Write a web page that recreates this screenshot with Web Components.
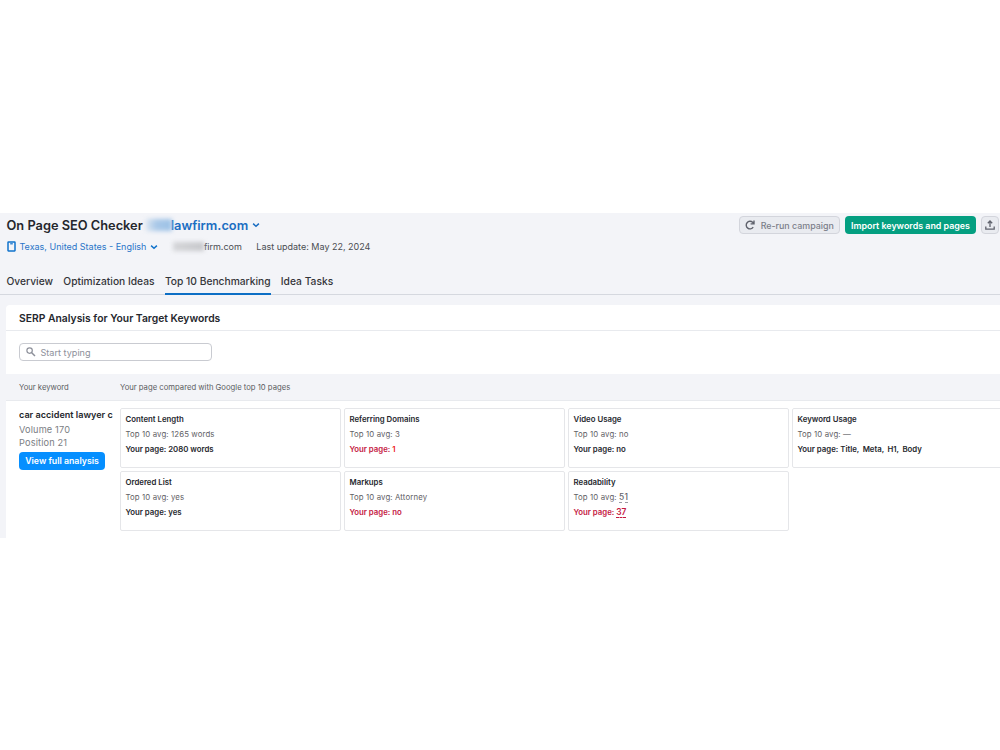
<!DOCTYPE html>
<html lang="en">
<head>
<meta charset="utf-8">
<title>On Page SEO Checker</title>
<style>
	body {
		margin: 0;
		background: #fff;
		font-family: Inter, 'Liberation Sans', sans-serif;
		color: #25272d;
	}
</style>
</head>
<body>
<seo-page></seo-page>

<script>
class SeoIcon extends HTMLElement {
	constructor() {
		super();
		this.attachShadow({ mode: "open" });
	}

	connectedCallback() {
		const icons = {
			chevron: '<svg width="8" height="6" viewBox="0 0 8 6"><path d="M1.1 1.6 4 4.2 6.9 1.6" stroke-width="1.5"/></svg>',
			device: '<svg width="9" height="11" viewBox="0 0 9 11"><rect x="1" y="1" width="7" height="9" rx=".4" stroke-width="1.5"/><path d="M3.2 2.8h2.6" stroke-width="1.2"/></svg>',
			reload: '<svg width="10" height="10" viewBox="0 0 10 10"><path d="M8.2 7.2A3.8 3.8 0 1 1 7.6 2.3L8.7 3.4M9 .6v3.3H5.6" stroke-width="1.4"/></svg>',
			upload: '<svg width="10" height="10" viewBox="0 0 10 10"><path d="M5 7V1.2M2.8 3.2 5 1l2.2 2.2M.8 6.4v2.7h8.4V6.4" stroke-width="1.3"/></svg>',
			search: '<svg width="10" height="10" viewBox="0 0 10 10"><circle cx="3.6" cy="3.6" r="2.7" stroke-width="1.2"/><path d="M5.7 5.7 9 9" stroke-width="1.5"/></svg>'
		};
		this.shadowRoot.innerHTML = `
			<style>
				:host {
					display: inline-flex;
					flex: none;
				}

				svg {
					display: block;
					fill: none;
					stroke: currentColor;
				}
			</style>
			${icons[this.getAttribute('name')]}
		`;
	}
}

class SeoButton extends HTMLElement {
	constructor() {
		super();
		this.attachShadow({ mode: "open" });
	}

	connectedCallback() {
		this.shadowRoot.innerHTML = `
			<style>
				:host {
					display: flex;
					align-items: center;
					justify-content: center;
					gap: 5.5px;
					box-sizing: border-box;
					height: 18px;
					border-radius: 4px;
					font-size: 8.9px;
					font-weight: 600;
					white-space: nowrap;
					cursor: pointer;
				}

				:host([kind="plain"]) {
					border: 1px solid #d3d5dc;
					background: #e9ebf0;
					color: #7b7e89;
					font-weight: 500;
				}

				:host([kind="plain"]) ::slotted(seo-icon) {
					color: #5f626c;
				}

				:host([kind="green"]) {
					background: #049f81;
					color: #fff;
				}

				:host([kind="blue"]) {
					background: #068fff;
					color: #fff;
					font-size: 8.75px;
				}
			</style>
			<slot></slot>
		`;
	}
}

class SeoHeader extends HTMLElement {
	constructor() {
		super();
		this.attachShadow({ mode: "open" });
	}

	connectedCallback() {
		this.shadowRoot.innerHTML = `
			<style>
				:host {
					display: block;
					box-sizing: border-box;
					height: 82px;
					border-bottom: 1px solid #d5d8df;
				}

				.top {
					display: flex;
					justify-content: space-between;
					height: 25px;
					padding: 3px 1px 0 6.5px;
					box-sizing: border-box;
				}

				.title {
					display: flex;
					align-items: center;
					height: 18px;
					font-size: 12.8px;
					font-weight: 600;
					white-space: nowrap;
				}

				.domain {
					color: #1b6ec2;
				}

				.title seo-icon {
					color: #1b6ec2;
					margin-left: 4px;
				}

				/* hidden part of the domain name */
				.mask {
					width: 26px;
					height: 12px;
					margin: 0 -1px 0 3px;
					background: linear-gradient(90deg, #dbe5f1, #a9c8e8 40%, #9dc2e7);
					filter: blur(2px);
				}

				.mask.grey {
					width: 31px;
					height: 9px;
					margin: 0 0 0 15px;
					background: linear-gradient(90deg, #d4d5d8, #c6c7cb);
				}

				.actions {
					display: flex;
					gap: 5px;
				}

				.rerun {
					width: 101px;
				}

				.import {
					width: 131px;
				}

				.export {
					width: 18px;
				}

				.meta {
					display: flex;
					align-items: center;
					height: 17px;
					padding-left: 7px;
					font-size: 9px;
					color: #4a4c52;
					white-space: nowrap;
				}

				.location {
					display: flex;
					align-items: center;
					gap: 3.5px;
					color: #2a74c8;
				}

				.location seo-icon {
					color: #1173cc;
				}

				.update {
					margin-left: 14.5px;
				}

				nav {
					display: flex;
					gap: 10.3px;
					margin-top: 12px;
					padding-left: 6.5px;
					font-size: 10.25px;
					font-weight: 500;
					color: #333539;
					white-space: nowrap;
				}

				nav span {
					box-sizing: border-box;
					height: 28px;
					line-height: 28px;
				}

				nav .active {
					border-bottom: 2px solid #0d6fc5;
				}
			</style>

			<div class="top">
				<div class="title">
					<span class="name">On Page SEO Checker</span>
					<span class="mask"></span>
					<span class="domain">lawfirm.com</span>
					<seo-icon name="chevron"></seo-icon>
				</div>
				<div class="actions">
					<seo-button kind="plain" class="rerun"><seo-icon name="reload"></seo-icon><span>Re-run campaign</span></seo-button>
					<seo-button kind="green" class="import">Import keywords and pages</seo-button>
					<seo-button kind="plain" class="export"><seo-icon name="upload"></seo-icon></seo-button>
				</div>
			</div>
			<div class="meta">
				<span class="location"><seo-icon name="device"></seo-icon><span>Texas, United States - English</span><seo-icon name="chevron"></seo-icon></span>
				<span class="mask grey"></span>
				<span>firm.com</span>
				<span class="update">Last update: May 22, 2024</span>
			</div>
			<nav>
				<span>Overview</span>
				<span>Optimization Ideas</span>
				<span class="active">Top 10 Benchmarking</span>
				<span>Idea Tasks</span>
			</nav>
		`;
	}
}

class MetricCard extends HTMLElement {
	constructor() {
		super();
		this.attachShadow({ mode: "open" });
	}

	connectedCallback() {
		this.shadowRoot.innerHTML = `
			<style>
				:host {
					display: block;
					box-sizing: border-box;
					height: 60px;
					padding: 2.5px 4.5px;
					border: 1px solid #e5e6e9;
					border-radius: 2px;
					font-size: 7.8px;
					line-height: 15.4px;
					white-space: nowrap;
				}

				.name,
				.yours {
					font-weight: 600;
				}

				.avg {
					color: #5f6166;
					letter-spacing: .12px;
				}

				:host([bad]) .yours {
					color: #c4183f;
				}
			</style>
			<div class="name">${this.getAttribute('name')}</div>
			<div class="avg">Top 10 avg: <slot name="avg"></slot></div>
			<div class="yours">Your page: <slot name="page"></slot></div>
		`;
	}
}

class SerpPanel extends HTMLElement {
	constructor() {
		super();
		this.attachShadow({ mode: "open" });
	}

	connectedCallback() {
		this.shadowRoot.innerHTML = `
			<style>
				:host {
					display: block;
					height: 233px;
					margin: 10px 0 0 6px;
					background: #fff;
					border-radius: 4px 0 0 0;
					overflow: hidden;
				}

				h2 {
					box-sizing: border-box;
					height: 26px;
					margin: 0;
					padding-left: 13px;
					border-bottom: 1px solid #e8eaee;
					font-size: 10.35px;
					font-weight: 600;
					line-height: 26px;
				}

				.filter {
					height: 43px;
					padding: 12px 13px 0;
					box-sizing: border-box;
				}

				.search {
					display: flex;
					align-items: center;
					gap: 5px;
					box-sizing: border-box;
					width: 193px;
					height: 18px;
					padding-left: 5.5px;
					border: 1px solid #c9cbd1;
					border-radius: 4px;
					font-size: 9.1px;
					color: #8d909a;
				}

				.columns {
					display: flex;
					box-sizing: border-box;
					height: 27px;
					padding-left: 13px;
					border-bottom: 1px solid #e8eaee;
					background: #f3f4f8;
					font-size: 7.7px;
					line-height: 27px;
					color: #5b5d62;
				}

				.columns span:first-child {
					width: 101px;
				}

				.row {
					display: flex;
					padding: 7px 0 0 13px;
				}

				.keyword {
					flex: none;
					width: 101px;
					font-size: 9.2px;
					white-space: nowrap;
				}

				.keyword b {
					display: block;
					width: 95px;
					height: 15px;
					line-height: 13px;
					overflow: hidden;
					font-size: 9.1px;
					font-weight: 600;
				}

				.keyword p {
					margin: 0;
					line-height: 13px;
					color: #7b7e84;
					letter-spacing: .15px;
				}

				.keyword seo-button {
					width: 86px;
					margin-top: 3px;
				}

				.metrics {
					display: grid;
					flex: none;
					grid-template-columns: repeat(4, 221px);
					gap: 3px;
				}

				.hint {
					border-bottom: 1px dashed #9a9ca5;
					font-weight: 500;
					font-size: 8.4px;
					letter-spacing: .3px;
				}

				.hint.red {
					border-color: #c4183f;
					font-weight: 600;
					letter-spacing: 0;
				}

				.one {
					color: #ee1b24;
				}
			</style>

			<h2>SERP Analysis for Your Target Keywords</h2>
			<div class="filter">
				<div class="search"><seo-icon name="search"></seo-icon><span>Start typing</span></div>
			</div>
			<div class="columns">
				<span>Your keyword</span>
				<span>Your page compared with Google top 10 pages</span>
			</div>
			<div class="row">
				<div class="keyword">
					<b>car accident lawyer c</b>
					<p>Volume 170</p>
					<p>Position 21</p>
					<seo-button kind="blue">View full analysis</seo-button>
				</div>
				<div class="metrics">
					<metric-card name="Content Length"><span slot="avg">1265 words</span><span slot="page">2080 words</span></metric-card>
					<metric-card name="Referring Domains" bad><span slot="avg">3</span><span slot="page" class="one">1</span></metric-card>
					<metric-card name="Video Usage"><span slot="avg">no</span><span slot="page">no</span></metric-card>
					<metric-card name="Keyword Usage"><span slot="avg">—</span><span slot="page" style="word-spacing: 1.5px">Title, Meta, H1, Body</span></metric-card>
					<metric-card name="Ordered List"><span slot="avg">yes</span><span slot="page">yes</span></metric-card>
					<metric-card name="Markups" bad><span slot="avg">Attorney</span><span slot="page">no</span></metric-card>
					<metric-card name="Readability" bad><span slot="avg" class="hint">51</span><span slot="page" class="hint red">37</span></metric-card>
				</div>
			</div>
		`;
	}
}

class SeoPage extends HTMLElement {
	constructor() {
		super();
		this.attachShadow({ mode: "open" });
	}

	connectedCallback() {
		this.shadowRoot.innerHTML = `
			<style>
				:host {
					display: block;
					height: 750px;
					box-sizing: border-box;
					padding-top: 213px;
					overflow: hidden;
				}

				main {
					height: 325px;
					background: #f3f4f8;
				}
			</style>
			<main>
				<seo-header></seo-header>
				<serp-panel></serp-panel>
			</main>
		`;
	}
}

customElements.define('seo-icon', SeoIcon);
customElements.define('seo-button', SeoButton);
customElements.define('seo-header', SeoHeader);
customElements.define('metric-card', MetricCard);
customElements.define('serp-panel', SerpPanel);
customElements.define('seo-page', SeoPage);
</script>
</body>
</html>
